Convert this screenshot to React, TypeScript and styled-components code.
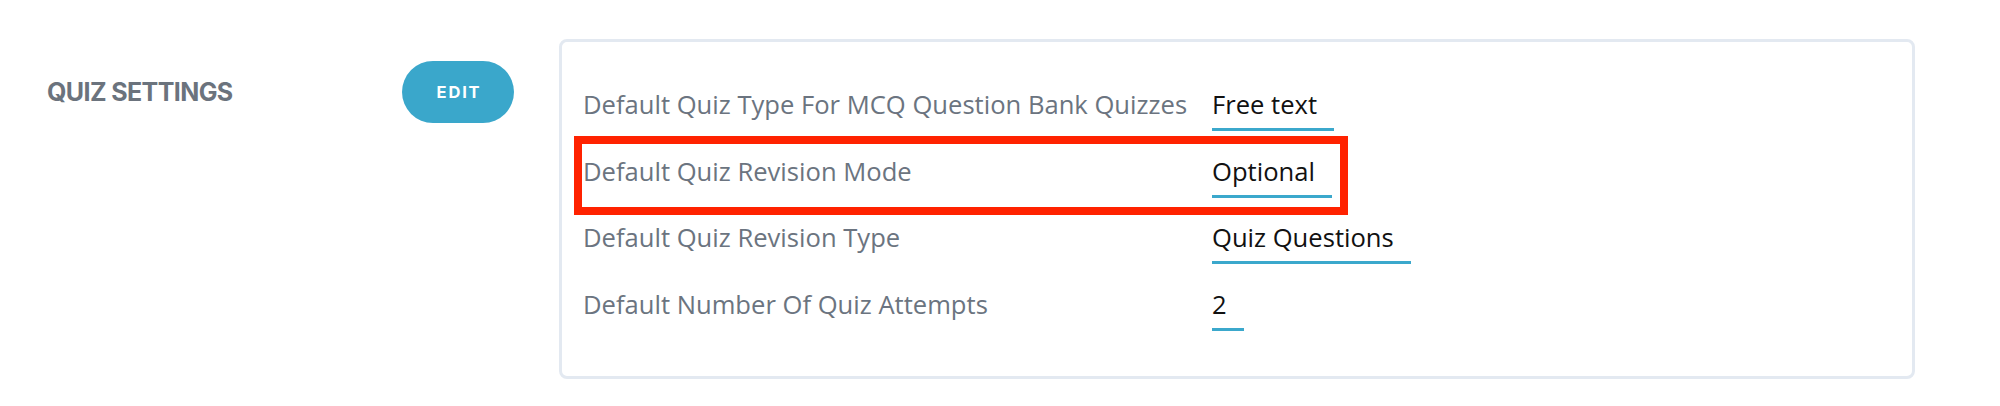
import React from 'react';
import styled, { createGlobalStyle } from 'styled-components';

const GlobalStyle = createGlobalStyle`
  body {
    margin: 0;
    background: #ffffff;
    font-family: 'Open Sans', 'Liberation Sans', sans-serif;
  }
`;

const settings = [
  { label: 'Default Quiz Type For MCQ Question Bank Quizzes', value: 'Free text' },
  { label: 'Default Quiz Revision Mode', value: 'Optional', highlighted: true },
  { label: 'Default Quiz Revision Type', value: 'Quiz Questions' },
  { label: 'Default Number Of Quiz Attempts', value: '2' },
];

export default function App() {
  return (
    <>
      <GlobalStyle />
      <StyledSection>
        <SectionHeader>
          <SectionTitle>QUIZ SETTINGS</SectionTitle>
          <EditButton type="button">EDIT</EditButton>
        </SectionHeader>
        <SettingsCard>
          <SettingsList>
            {settings.map((item) => (
              <SettingRow key={item.label} $highlighted={item.highlighted}>
                <SettingLabel>{item.label}</SettingLabel>
                <SettingValue>{item.value}</SettingValue>
              </SettingRow>
            ))}
          </SettingsList>
        </SettingsCard>
      </StyledSection>
    </>
  );
}

const StyledSection = styled.section`
  display: flex;
  align-items: flex-start;
  padding: 39px 0 0 47px;
`;

const SectionHeader = styled.div`
  display: flex;
  align-items: center;
  justify-content: space-between;
  width: 467px;
  height: 62px;
  margin-top: 22px;
`;

const SectionTitle = styled.h2`
  margin: 0;
  font-family: 'Inter', 'Liberation Sans', sans-serif;
  font-weight: 700;
  font-size: 25px;
  letter-spacing: -0.6px;
  line-height: 1;
  color: #6b737d;
`;

const EditButton = styled.button`
  width: 112px;
  height: 62px;
  border: none;
  border-radius: 31px;
  background-color: #3aa7cb;
  color: #ffffff;
  font-family: 'Inter', 'Liberation Sans', sans-serif;
  font-weight: 700;
  font-size: 16.5px;
  letter-spacing: 1.8px;
  padding: 0 0 0 2px;
  cursor: pointer;
`;

const SettingsCard = styled.div`
  box-sizing: border-box;
  width: 1356px;
  height: 340px;
  margin-left: 45px;
  border: 3px solid #e3e9f1;
  border-radius: 8px;
  padding: 45px 0 0 21px;
`;

const SettingsList = styled.div`
  display: flex;
  flex-direction: column;
  align-items: flex-start;
  gap: 22.7px;
`;

const SettingRow = styled.div<{ $highlighted?: boolean }>`
  display: flex;
  align-items: flex-start;
  font-size: 25.6px;
  line-height: 36px;

  ${({ $highlighted }) =>
    $highlighted &&
    `
    padding: 10px 8px 9px 1px;
    margin: -10px -8px -9px -1px;
    outline: 8px solid #ff2200;
  `}
`;

const SettingLabel = styled.span`
  width: 629px;
  color: #6b7480;
`;

const SettingValue = styled.span`
  padding: 0 17px 5px 0;
  border-bottom: 3px solid #3ba8cc;
  color: #111111;
`;
